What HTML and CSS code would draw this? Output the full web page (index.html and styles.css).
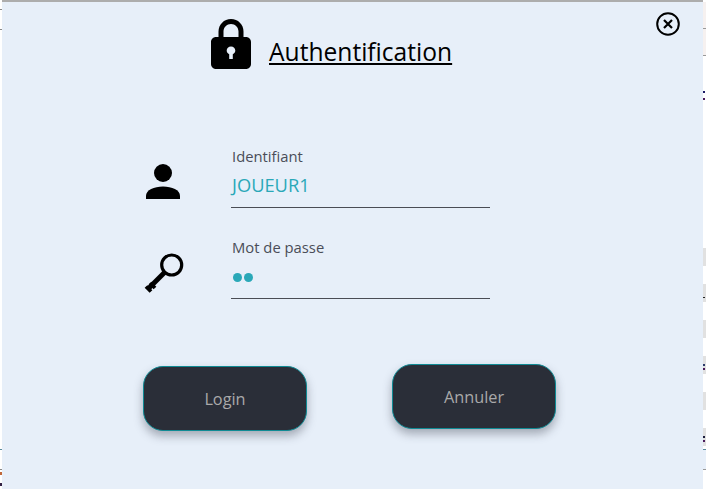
FILE: index.html
```html
<!DOCTYPE html>
<html lang="fr">
<head>
<meta charset="utf-8">
<title>Authentification</title>
<link rel="stylesheet" href="styles.css">
</head>
<body>
<div class="backdrop">
  <i class="tint"></i>
  <i class="tick t1"></i><i class="tick t2"></i>
  <i class="blk b1"></i><i class="blk b2"></i><i class="blk b3"></i><i class="blk b4"></i><i class="blk b5"></i><i class="blk b6"></i>
  <i class="spot s1"></i><i class="spot s2"></i><i class="spot s3"></i><i class="spot s4"></i><i class="spot s5"></i><i class="spot s6"></i><i class="spot s7"></i>
  <i class="band"></i><i class="tick t3"></i><i class="tick t4"></i>
  <i class="side l1"></i><i class="side l2"></i><i class="side l3"></i><i class="side l4"></i><i class="side l5"></i><i class="side l6"></i>
</div>
<main class="dialog">
  <button class="close" aria-label="Fermer">
    <svg viewBox="0 0 24 24" width="24" height="24"><circle cx="12" cy="12" r="10.8" fill="none" stroke="#000" stroke-width="2"/><path d="M8 8l8 8M16 8l-8 8" fill="none" stroke="#000" stroke-width="2.2"/></svg>
  </button>
  <header class="head">
    <svg class="lock" viewBox="0 0 40 50" width="40" height="50"><path fill-rule="evenodd" d="M5 18h2.500v-5.500C7.500 5.500 13 0 20 0s12.500 5.500 12.500 12.500V18H35c2.800 0 5 2.200 5 5v22c0 2.800-2.200 5-5 5H5c-2.800 0-5-2.200-5-5V23c0-2.800 2.200-5 5-5zM12.500 18h15v-5.500C27.500 8.300 24.200 5 20 5s-7.500 3.300-7.500 7.500zM20 27.500c-2.500 0-4.300 1.800-4.300 4 0 1.600 1 3 2.500 3.700V40h3.600v-4.800c1.500-.7 2.500-2.100 2.500-3.700 0-2.200-1.800-4-4.300-4z"/></svg>
    <h1 class="title">Authentification</h1>
  </header>
  <section class="form">
    <div class="row">
      <svg class="ico user" viewBox="0 0 34 35" width="34" height="35"><circle cx="17" cy="9" r="9"/><path d="M0 35v-3c0-6 8-9.500 17-9.500S34 26 34 32v3z"/></svg>
      <div class="field">
        <label class="lbl">Identifiant</label>
        <div class="val">JOUEUR1</div>
      </div>
    </div>
    <div class="row">
      <svg class="ico key" viewBox="0 0 40 40" width="40" height="40"><circle cx="27.700" cy="12" r="10" fill="none" stroke="#000" stroke-width="3.200"/><path d="M20.500 19.500L4 36" stroke="#000" stroke-width="5" fill="none"/><path d="M6 30l5 5M2 33.500l5 5" stroke="#000" stroke-width="3.800" fill="none"/></svg>
      <div class="field">
        <label class="lbl">Mot de passe</label>
        <div class="val dots"><span></span><span></span></div>
      </div>
    </div>
  </section>
  <footer class="actions">
    <button class="btn">Login</button>
    <button class="btn up">Annuler</button>
  </footer>
</main>
</body>
</html>
```
FILE: styles.css
```css
* { box-sizing: border-box; }
html, body { margin: 0; height: 100%; }
body { background: #fff; position: relative; overflow: hidden; width: 706px; height: 489px; font-family: "Open Sans", "Noto Sans", sans-serif; }
.backdrop { position: absolute; inset: 0; }
.backdrop i { position: absolute; display: block; }
.tint { right: 0; top: 2px; width: 3px; height: 53px; background: #f6f1f0; }
.tick { right: 0; width: 3px; height: 1px; background: #999; }
.t1 { top: 28px; } .t2 { top: 55px; }
.t3 { top: 449px; background: #5b8a9c; } .t4 { top: 469px; }
.band { right: 0; top: 450px; width: 3px; height: 19px; background: #e7eff9; }
.blk { right: 0; width: 3px; height: 18px; background: #e1e1e1; }
.b1 { top: 248px; } .b2 { top: 284px; } .b3 { top: 320px; } .b4 { top: 356px; } .b5 { top: 392px; } .b6 { top: 428px; }
.spot { right: 1px; width: 2px; height: 2px; background: #1a1a66; }
.s1 { top: 91px; } .s2 { top: 98px; background: #4a1a5a; }
.s3 { top: 297px; height: 1px; background: #222; }
.s4 { top: 364px; background: #2a3a6a; } .s5 { top: 368px; background: #4a1a5a; }
.s6 { top: 436px; background: #1a1a3a; } .s7 { top: 440px; background: #4a1a5a; }
.side { left: 0; width: 2px; height: 1px; background: #888; }
.l1 { top: 9px; } .l2 { top: 29px; }
.l3 { top: 449px; background: #5b8a9c; } .l4 { top: 469px; }
.l5 { top: 472px; height: 3px; background: #c0683a; } .l6 { top: 483px; height: 3px; background: #332244; }
.dialog { position: absolute; left: 2px; top: 2px; width: 701px; height: 487px; background: #e7eff9; box-shadow: 0 -2px 0 #adadad; }
.close { position: absolute; right: 23px; top: 10px; width: 24px; height: 24px; padding: 0; border: 0; background: none; line-height: 0; }
.head { display: flex; align-items: flex-end; padding: 17px 0 0 209px; }
.lock { display: block; }
.title { margin: 0 0 2px 18px; font-size: 24.600px; font-weight: 400; color: #000; line-height: 30px; text-decoration: underline; }
.form { display: flex; flex-direction: column; gap: 31px; padding: 79px 0 0 141px; }
.row { display: grid; grid-template-columns: 88px 259px; align-items: center; }
.ico { display: block; }
.user { margin: 6px 0 0 3px; }
.key { margin: 7px 0 0 1px; }
.field { height: 60px; border-bottom: 1px solid #4a4d55; padding-left: 1px; }
.lbl { display: block; font-size: 14.800px; line-height: 18px; margin-top: -1px; color: #4a4d58; }
.val { font-size: 18.300px; line-height: 24px; margin-top: 8px; color: #2aa8b8; font-weight: 400; }
.dots { display: flex; gap: 2px; height: 24px; margin-top: 9px; align-items: center; padding-left: 1px; }
.dots span { width: 9px; height: 9px; border-radius: 50%; background: #2aa8b8; }
.actions { display: flex; gap: 85px; padding: 67px 0 0 141px; align-items: flex-start; }
.btn { width: 164px; height: 65px; border-radius: 20px; border: 1px solid #0f8a94; background: #2a2e38; color: #a9a9a9; font-family: inherit; font-size: 16.300px; box-shadow: 0 5px 10px rgba(60,64,80,.4); }
.up { margin-top: -2px; }
```
